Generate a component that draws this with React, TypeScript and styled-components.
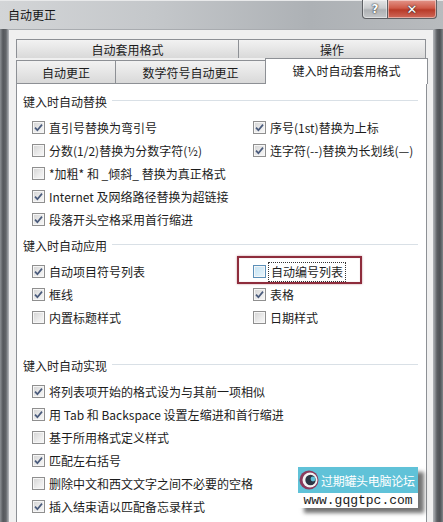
import React from "react";
import styled, { createGlobalStyle } from "styled-components";

const Global = createGlobalStyle`
  body {
    margin: 0;
    overflow: hidden;
    background: #fff;
  }
`;

const font = `"Noto Sans CJK SC", "Noto Sans", "Liberation Sans", sans-serif`;

const Window = styled.div`
  position: relative;
  width: 443px;
  height: 522px;
  overflow: hidden;
  display: flex;
  flex-direction: column;
  font-family: ${font};
  background:
    linear-gradient(to right, #8c9094 0, #55585c 3px, #63666a 6px, #9a9ea2 8px, transparent 8px),
    linear-gradient(to left, #7f8387 0, #4e5155 3px, #5c5f63 6px, #a3a6aa 9px, transparent 9px),
    #c3c6c9;
`;

const TitleBar = styled.div`
  height: 29px;
  flex-shrink: 0;
  display: flex;
  align-items: flex-start;
  background: linear-gradient(to right, #d3d5d7 0%, #c4c7ca 35%, #adb1b5 70%, #b8bbbe 100%);
  box-shadow: inset 0 1px 0 #e8e9ea;
`;

const Title = styled.span`
  padding: 6px 0 0 8px;
  font-size: 12px;
  line-height: 17px;
  color: #151515;
`;

const Caption = styled.div`
  margin-left: auto;
  margin-right: 6px;
  display: flex;
`;

const CaptionButton = styled.div<{ $close?: boolean }>`
  width: ${(p) => (p.$close ? 49 : 26)}px;
  height: 19px;
  box-sizing: border-box;
  border: 1px solid #5e6064;
  border-top: none;
  border-radius: ${(p) => (p.$close ? "0 0 4px 0" : "0 0 0 4px")};
  ${(p) => (p.$close ? "border-left: none;" : "")}
  display: flex;
  align-items: center;
  justify-content: center;
  color: #fff;
  font-family: "DejaVu Sans", sans-serif;
  font-weight: bold;
  font-size: ${(p) => (p.$close ? 13 : 12)}px;
  text-shadow: 0 0 2px #333, 0 0 1px #222;
  background: ${(p) =>
    p.$close
      ? "linear-gradient(to bottom, #e3958a 0%, #cf5a48 45%, #b83a28 55%, #d0695a 100%)"
      : "linear-gradient(to bottom, #e4e5e6 0%, #c9cbcd 45%, #aeb1b4 55%, #c5c7c9 100%)"};
  box-shadow: inset 0 0 0 1px rgba(255, 255, 255, 0.45);
`;

const DialogBody = styled.div`
  flex: 1;
  margin: 0 9px 0 8px;
  display: flex;
  flex-direction: column;
  background: #f0f0f0;
  border: 1px solid #a9acb0;
  border-bottom: none;
  padding: 9px 7px 0 7px;
  min-height: 0;
`;

const TabRow = styled.div<{ $bottom?: boolean }>`
  display: flex;
  align-items: flex-end;
  height: ${(p) => (p.$bottom ? 25 : 19)}px;
`;

const Tab = styled.div<{ $w?: number; $active?: boolean }>`
  ${(p) => (p.$w ? `width: ${p.$w}px;` : "flex: 1;")}
  box-sizing: border-box;
  height: ${(p) => (p.$active ? 26 : 23)}px;
  display: flex;
  align-items: center;
  justify-content: center;
  font-size: 12px;
  color: #1b1b1b;
  border: 1px solid #8d9095;
  border-bottom: none;
  margin-left: -1px;
  &:first-child {
    margin-left: 0;
  }
  background: ${(p) =>
    p.$active ? "#fff" : "linear-gradient(to bottom, #f2f2f2 0%, #e6e6e6 50%, #d9d9d9 100%)"};
  ${(p) =>
    p.$active
      ? `position: relative; z-index: 1; margin-bottom: -1px; padding-bottom: 2px; margin-right: -2px;`
      : ""}
`;

const TopTab = styled(Tab)`
  height: 19px;
`;

const Panel = styled.div`
  flex: 1;
  background: #fff;
  border: 1px solid #8d9095;
  border-bottom: none;
  padding-top: 7px;
  margin-right: -1px;
`;

const Section = styled.div<{ $extra?: number }>`
  & + & {
    margin-top: 4px;
  }
  padding-bottom: ${(p) => p.$extra ?? 0}px;
`;

const Heading = styled.div`
  height: 20px;
  display: flex;
  align-items: center;
  gap: 5px;
  padding-left: 6px;
  margin-right: 8px;
  font-size: 12px;
  color: #222;
  &::after {
    content: "";
    flex: 1;
    height: 1px;
    background: #d9e0e6;
    margin-top: -1px;
  }
`;

const Columns = styled.div`
  display: flex;
  padding-left: 15px;
  margin-top: 5px;
`;

const Column = styled.div<{ $w?: number }>`
  display: flex;
  flex-direction: column;
  ${(p) => (p.$w ? `width: ${p.$w}px;` : "flex: 1;")}
`;

const Item = styled.div<{ $highlight?: boolean }>`
  height: 23px;
  display: flex;
  align-items: center;
  gap: 4px;
  font-size: 12px;
  color: #1c1c1c;
  white-space: nowrap;
  ${(p) =>
    p.$highlight
      ? `position: relative;
  &::before {
    content: "";
    position: absolute;
    left: -16px;
    top: -4px;
    width: 125px;
    height: 28px;
    box-sizing: border-box;
    border: 2px solid #8e2c3c;
    box-shadow: 0 0 2px rgba(140, 44, 60, 0.5), inset 0 0 1px rgba(140, 44, 60, 0.4);
  }`
      : ""}
`;

const Box = styled.span<{ $hover?: boolean }>`
  width: 13px;
  height: 13px;
  flex-shrink: 0;
  box-sizing: border-box;
  display: flex;
  align-items: center;
  justify-content: center;
  border: 1px solid ${(p) => (p.$hover ? "#5b8fb8" : "#8f8f8f")};
  box-shadow: inset 0 0 0 1px #f6f6f6;
  background: ${(p) =>
    p.$hover
      ? "linear-gradient(135deg, #c4e2f3 0%, #e8f5fc 100%)"
      : "linear-gradient(135deg, #d3d3d3 0%, #ececec 60%, #f7f7f7 100%)"};
`;

const Label = styled.span<{ $focus?: boolean }>`
  line-height: 16px;
  ${(p) => (p.$focus ? "outline: 1px dotted #333; outline-offset: 1px; padding: 0 1px;" : "")}
`;

const Watermark = styled.div`
  position: absolute;
  left: 298px;
  top: 467px;
  width: 120px;
  box-shadow: 6px 5px 4px rgba(0, 0, 0, 0.55);
`;

const MarkTop = styled.div`
  height: 26px;
  display: flex;
  align-items: center;
  gap: 2px;
  padding-left: 1px;
  background: #60c2d8;
  color: #fff;
  font-size: 12px;
  letter-spacing: -0.3px;
  white-space: nowrap;
`;

const MarkBottom = styled.div`
  height: 15px;
  background: #fff;
  display: flex;
  align-items: center;
  justify-content: center;
  font-family: "Liberation Mono", monospace;
  font-size: 13px;
  color: #1a1a1a;
`;

type Opt = { text: string; on?: boolean; hl?: boolean };

const Check = ({ text, on, hl }: Opt) => (
  <Item $highlight={hl}>
    <Box $hover={hl}>
      {on && (
        <svg width="9" height="9" viewBox="0 0 9 9">
          <path d="M1 4.6 L3.4 7.2 L8 1.6" fill="none" stroke="#4a5b7c" strokeWidth="1.7" />
        </svg>
      )}
    </Box>
    <Label $focus={hl}>{text}</Label>
  </Item>
);

const Logo = () => (
  <svg width="20" height="20" viewBox="0 0 20 20">
    <circle cx="10" cy="10" r="9.5" fill="#8b3a5c" />
    <circle cx="11" cy="10" r="7.5" fill="#f4f4f4" />
    <circle cx="11.5" cy="10" r="5.2" fill="#2c3645" />
    <circle cx="14" cy="9" r="2.4" fill="#60c2d8" />
  </svg>
);

const replaceLeft: Opt[] = [
  { text: "直引号替换为弯引号", on: true },
  { text: "分数(1/2)替换为分数字符(½)" },
  { text: "*加粗* 和 _倾斜_ 替换为真正格式" },
  { text: "Internet 及网络路径替换为超链接", on: true },
  { text: "段落开头空格采用首行缩进", on: true },
];
const replaceRight: Opt[] = [
  { text: "序号(1st)替换为上标", on: true },
  { text: "连字符(--)替换为长划线(—)", on: true },
];
const applyLeft: Opt[] = [
  { text: "自动项目符号列表", on: true },
  { text: "框线", on: true },
  { text: "内置标题样式" },
];
const applyRight: Opt[] = [
  { text: "自动编号列表", hl: true },
  { text: "表格", on: true },
  { text: "日期样式" },
];
const doList: Opt[] = [
  { text: "将列表项开始的格式设为与其前一项相似", on: true },
  { text: "用 Tab 和 Backspace 设置左缩进和首行缩进", on: true },
  { text: "基于所用格式定义样式" },
  { text: "匹配左右括号", on: true },
  { text: "删除中文和西文文字之间不必要的空格" },
  { text: "插入结束语以匹配备忘录样式", on: true },
];

export default function App() {
  return (
    <>
      <Global />
      <Window>
        <TitleBar>
          <Title>自动更正</Title>
          <Caption>
            <CaptionButton>?</CaptionButton>
            <CaptionButton $close>✕</CaptionButton>
          </Caption>
        </TitleBar>
        <DialogBody>
          <TabRow>
            <TopTab $w={223}>自动套用格式</TopTab>
            <TopTab>操作</TopTab>
          </TabRow>
          <TabRow $bottom>
            <Tab $w={100}>自动更正</Tab>
            <Tab $w={151}>数学符号自动更正</Tab>
            <Tab $active>键入时自动套用格式</Tab>
          </TabRow>
          <Panel>
            <Section>
              <Heading>键入时自动替换</Heading>
              <Columns>
                <Column $w={221}>
                  {replaceLeft.map((o) => (
                    <Check key={o.text} {...o} />
                  ))}
                </Column>
                <Column>
                  {replaceRight.map((o) => (
                    <Check key={o.text} {...o} />
                  ))}
                </Column>
              </Columns>
            </Section>
            <Section $extra={22}>
              <Heading>键入时自动应用</Heading>
              <Columns>
                <Column $w={221}>
                  {applyLeft.map((o) => (
                    <Check key={o.text} {...o} />
                  ))}
                </Column>
                <Column>
                  {applyRight.map((o) => (
                    <Check key={o.text} {...o} />
                  ))}
                </Column>
              </Columns>
            </Section>
            <Section>
              <Heading>键入时自动实现</Heading>
              <Columns>
                <Column>
                  {doList.map((o) => (
                    <Check key={o.text} {...o} />
                  ))}
                </Column>
              </Columns>
            </Section>
          </Panel>
        </DialogBody>
        <Watermark>
          <MarkTop>
            <Logo />
            <span>过期罐头电脑论坛</span>
          </MarkTop>
          <MarkBottom>www.gqgtpc.com</MarkBottom>
        </Watermark>
      </Window>
    </>
  );
}
